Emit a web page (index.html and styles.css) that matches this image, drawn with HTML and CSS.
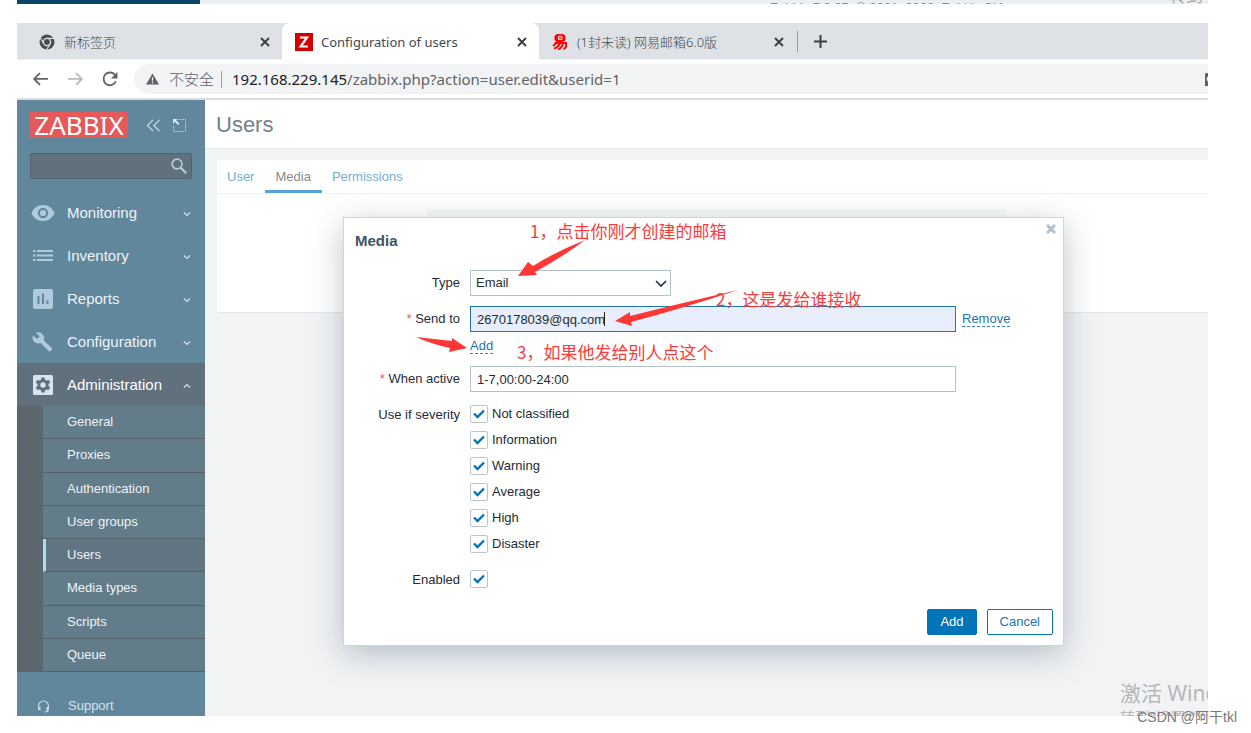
FILE: index.html
```html
<!DOCTYPE html>
<html lang="en">
<head>
<meta charset="utf-8">
<title>Configuration of users</title>
<link rel="stylesheet" href="styles.css">
</head>
<body>
<div class="strip">
  <div class="strip-nav"></div>
  <div class="strip-foot"><span>Zabbix 5.0.25. © 2001–2022, Zabbix SIA</span><span class="strip-mark" lang="zh">转到</span></div>
</div>

<div class="browser">
  <div class="tabbar" lang="zh">
    <div class="tab tab-first">
      <svg class="fav" viewBox="0 0 16 16"><circle cx="8" cy="8" r="7.5" fill="#494c50"/><circle cx="8" cy="8" r="3.6" fill="#494c50" stroke="#dee1e6" stroke-width="1.3"/><path d="M8 4.3h7M4.8 9.8L1.4 4M11.2 9.8L7.8 15.500" stroke="#dee1e6" stroke-width="1.200"/></svg>
      <span class="tab-title">新标签页</span>
      <button class="x" aria-label="Close tab"><svg viewBox="0 0 10 10"><path d="M1 1l8 8M9 1L1 9"/></svg></button>
    </div>
    <div class="tab tab-active">
      <svg class="fav fav-z" viewBox="0 0 18 18"><path fill="#d40000" d="M0 0h18v18H0z"/><path d="M5 4.500h7L5.700 13.500H13" fill="none" stroke="#fff" stroke-width="2.200"/></svg>
      <span class="tab-title">Configuration of users</span>
      <button class="x" aria-label="Close tab"><svg viewBox="0 0 10 10"><path d="M1 1l8 8M9 1L1 9"/></svg></button>
    </div>
    <div class="tab tab-last">
      <svg class="fav" viewBox="0 0 16 16"><path fill="#f00" d="M5 0h6l2.500 2v4L11 8H5L2.500 6V2z"/><path d="M6.500 2h3.500v3.500H6.500zM6.500 3.800h3" stroke="#dee1e6" fill="none" stroke-width=".9"/><path d="M2.500 9h11.500q1 5-2.500 6.200M5.500 8L1 12M8 9.500q-2 4-6 5M11 9.500q-1 4.500-5 6" fill="none" stroke="#f00" stroke-width="1.800"/></svg>
      <span class="tab-title">(1封未读) 网易邮箱6.0版</span>
      <button class="x" aria-label="Close tab"><svg viewBox="0 0 10 10"><path d="M1 1l8 8M9 1L1 9"/></svg></button>
    </div>
    <button class="newtab" aria-label="New tab"><svg viewBox="0 0 13 13"><path d="M6.500 0v13M0 6.500h13"/></svg></button>
  </div>

  <div class="toolbar" lang="zh">
    <button class="nav" aria-label="Back"><svg viewBox="0 0 16 16"><path d="M15 7.500H2M7.500 2L2 7.500 7.500 13"/></svg></button>
    <button class="nav nav-off" aria-label="Forward"><svg viewBox="0 0 16 16"><path d="M1 7.500h13M8.500 2L14 7.500 8.500 13"/></svg></button>
    <button class="nav" aria-label="Reload"><svg viewBox="0 0 16 16"><path d="M13 9.800A6 6 0 1 1 12.300 3.800"/><path d="M14.500 1v6h-6z" fill="#5f6368" stroke="none"/></svg></button>
    <div class="omnibox">
      <svg class="warn" viewBox="0 0 14 12"><path fill="#5f6368" d="M7 0l7 12H0z"/><path d="M7 4v4M7 9v1.500" stroke="#fff" stroke-width="1.300"/></svg>
      <span class="insecure">不安全</span>
      <span class="sep"></span>
      <span class="url"><b>192.168.229.145</b>/zabbix.php?action=user.edit&amp;userid=1</span>
      <svg class="key" viewBox="0 0 3 13"><path fill="#5f6368" d="M1 0h2v3.500a3 3 0 0 0 0 5V13H0V1z"/></svg>
    </div>
  </div>

  <div class="app">
    <aside class="sidebar">
      <div class="brand">
        <a class="logo" href="#">ZABBIX</a>
        <button class="side-btn" aria-label="Collapse sidebar"><svg viewBox="0 0 16 14"><path d="M7.500 1l-6 6 6 6M14.500 1l-6 6 6 6" fill="none" stroke="#c9dbe6" stroke-width="1.300"/></svg></button>
        <button class="side-btn" aria-label="Hide sidebar"><svg viewBox="0 0 14 14"><path d="M6 .5h7.500v13H.5V7" fill="none" stroke="#c9dbe6" stroke-dasharray="1.400 .8"/><path d="M0 0h5L3.500 1.500 7 5 5.500 6.500 2 3 0 5z" fill="#e1ebf1"/></svg></button>
      </div>
      <div class="search">
        <input type="text" aria-label="Search">
        <svg viewBox="0 0 16 16"><circle cx="6" cy="6" r="4.900" fill="none" stroke="#b4ccd9" stroke-width="1.700"/><path d="M9.500 9.500l5.700 5.700" stroke="#b4ccd9" stroke-width="2.200"/></svg>
      </div>
      <nav>
        <a class="item" href="#"><svg class="ico" viewBox="0 0 24 20"><path fill="#afcbdb" fill-rule="evenodd" d="M12 2C6.500 2 2.200 5.300.5 10c1.700 4.700 6 8 11.500 8s9.800-3.300 11.500-8C21.800 5.300 17.500 2 12 2zm0 13.200a5.200 5.200 0 1 1 0-10.400 5.200 5.200 0 0 1 0 10.400z"/><circle cx="12" cy="10" r="3.100" fill="#afcbdb"/></svg><span>Monitoring</span><svg class="chev" viewBox="0 0 8 8"><path d="M1 3.500l3 3 3-3"/></svg></a>
        <a class="item" href="#"><svg class="ico" viewBox="0 0 24 20"><path d="M2 5h2.500M6 5h16M2 9.500h2.500M6 9.500h16M2 14h2.500M6 14h16" stroke="#afcbdb" stroke-width="2.200"/></svg><span>Inventory</span><svg class="chev" viewBox="0 0 8 8"><path d="M1 3.500l3 3 3-3"/></svg></a>
        <a class="item" href="#"><svg class="ico" viewBox="0 0 24 20"><rect x="2" width="20" height="20" rx="2" fill="#afcbdb"/><path d="M7.500 7v8M12 4.500V15M16.500 11.500V15" stroke="#61879d" stroke-width="2"/></svg><span>Reports</span><svg class="chev" viewBox="0 0 8 8"><path d="M1 3.500l3 3 3-3"/></svg></a>
        <a class="item" href="#"><svg class="ico" viewBox="0 0 24 20"><path fill="#afcbdb" d="M21 16.400l-8.300-8.200c.8-2.100.4-4.500-1.400-6.200C9.500.2 6.900-.2 4.800.7l3.800 3.700L6 7.100 2.100 3.400c-1 2.100-.5 4.700 1.300 6.400 1.700 1.700 4.100 2.100 6.200 1.300l8.300 8.200c.4.4.9.4 1.300 0l1.900-1.900c.4-.4.3-.8-.1-1z"/></svg><span>Configuration</span><svg class="chev" viewBox="0 0 8 8"><path d="M1 3.500l3 3 3-3"/></svg></a>
        <a class="item item-open" href="#"><svg class="ico" viewBox="0 0 24 20"><rect x="2" width="20" height="20" rx="1.500" fill="#d3e5f0"/><path fill="#5f707c" d="M10.500 2.500h3l.5 2.200 1.500.9 2.200-.7 1.500 2.600-1.700 1.600v1.800l1.700 1.600-1.500 2.600-2.200-.7-1.500.9-.5 2.200h-3l-.5-2.200-1.500-.9-2.200.7-1.500-2.600 1.700-1.600V9.100L4.800 7.500l1.500-2.600 2.200.7 1.500-.9z"/><circle cx="12" cy="10" r="2.700" fill="#d3e5f0"/></svg><span>Administration</span><svg class="chev" viewBox="0 0 8 8"><path d="M1 6.500l3-3 3 3"/></svg></a>
        <div class="submenu">
          <a href="#">General</a>
          <a href="#">Proxies</a>
          <a href="#">Authentication</a>
          <a href="#">User groups</a>
          <a class="current" href="#">Users</a>
          <a href="#">Media types</a>
          <a href="#">Scripts</a>
          <a href="#">Queue</a>
        </div>
      </nav>
      <a class="support" href="#"><svg viewBox="0 0 13 13"><path d="M1.500 8V6a5 5 0 0 1 10 0v2M11.500 9c0 2-1.500 3-4 3" fill="none" stroke="#c5d8e3" stroke-width="1.200"/><path fill="#c5d8e3" d="M1 7h2.500v4L1 9.500zM12 7H9.500v4L12 9.500z"/></svg><span>Support</span></a>
    </aside>

    <main class="main">
      <header class="page-head"><h1>Users</h1></header>
      <section class="card">
        <div class="subtabs">
          <a href="#">User</a>
          <a class="on" href="#">Media</a>
          <a href="#">Permissions</a>
        </div>
        <div class="card-body"><div class="media-list"></div></div>
      </section>

      <form class="modal">
        <h2>Media</h2>
        <button type="button" class="modal-x" aria-label="Close"><svg viewBox="0 0 10 10"><path d="M1 1l8 8M9 1L1 9"/></svg></button>
        <div class="fields">
          <label for="type">Type</label>
          <div class="row select-box"><select id="type"><option>Email</option></select><svg viewBox="0 0 12 8"><path d="M1 1l5 5 5-5"/></svg></div>
          <label for="sendto" class="req">Send to</label>
          <div class="row sendto"><input id="sendto" class="text focus" type="text" value="2670178039@qq.com"><i class="caret"></i><a class="dashed" href="#">Remove</a></div>
          <span></span>
          <div class="row addrow"><a class="dashed" href="#">Add</a></div>
          <label for="when" class="req">When active</label>
          <div class="row"><input id="when" class="text" type="text" value="1-7,00:00-24:00"></div>
          <span class="label" id="sev">Use if severity</span>
          <div class="checks" role="group" aria-labelledby="sev">
            <label><input type="checkbox" checked>Not classified</label>
            <label><input type="checkbox" checked>Information</label>
            <label><input type="checkbox" checked>Warning</label>
            <label><input type="checkbox" checked>Average</label>
            <label><input type="checkbox" checked>High</label>
            <label><input type="checkbox" checked>Disaster</label>
          </div>
          <label for="enabled" class="label">Enabled</label>
          <div class="checks"><input id="enabled" type="checkbox" checked></div>
        </div>
        <div class="actions"><button type="button" class="btn primary">Add</button><button type="button" class="btn">Cancel</button></div>

        <svg class="arrows"><g transform="translate(-344 -218)" fill="#ff3636"><path d="M518 276l10-14 5 4q22-14 52-26q-24 18-50 32l2 3z"/><path d="M615 321l15-9v4q52-13 108-26q-54 18-107 32l1 4z"/><path d="M467 348l-15-10v3q-18-2-36-4q15 7 34 11l-1 4z"/></g></svg>
        <span class="note note-1" lang="zh">1，点击你刚才创建的邮箱</span>
        <span class="note note-2" lang="zh">2，这是发给谁接收</span>
        <span class="note note-3" lang="zh">3，如果他发给别人点这个</span>
      </form>
      <div class="activate" lang="zh"><p>激活 Windows</p><p class="small">转到“设置”以激活 Windows。</p></div>
    </main>
  </div>
</div>
<div class="credit" lang="zh">CSDN @阿干tkl</div>
</body>
</html>
```

FILE: styles.css
```css
* { box-sizing: border-box; }
body {
  position: relative;
  display: flex;
  flex-direction: column;
  gap: 19px;
  height: 100vh;
  margin: 0;
  padding: 0 43px 17px 17px;
  overflow: hidden;
  background: #fff;
  color: #1f2c33;
  font: 13px/16px "Liberation Sans", "Noto Sans CJK SC", sans-serif;
}
a { text-decoration: none; color: inherit; }
button { padding: 0; border: 0; background: none; font: inherit; }
svg { display: block; }
h1, h2, p { margin: 0; }

.strip { display: flex; flex: none; height: 4px; overflow: hidden; }
.strip-nav { width: 183px; background: #0a466a; }
.strip-foot {
  position: relative;
  flex: 1;
  padding-left: 570px;
  background: #ebeef0;
  color: #768d99;
  white-space: nowrap;
}
.strip-mark { position: absolute; right: 5px; bottom: -1px; color: #aaa; font-size: 17px; }

.browser { display: flex; flex: 1; flex-direction: column; min-height: 0; overflow: hidden; }

.tabbar {
  display: flex;
  flex: none;
  height: 37px;
  border-bottom: 1px solid #f1f2f4;
  background: #dee1e6;
  color: #45494d;
  font: 13px/20px "Noto Sans", "Noto Sans CJK SC", sans-serif;
}
.tab { display: flex; align-items: center; height: 37px; }
.tab-first { width: 265px; padding: 0 11px 0 22px; }
.tab-active { width: 257px; padding: 0 11px 0 13px; border-radius: 8px 8px 0 0; background: #fff; }
.tab-last { width: 258px; padding: 0 12px 0 13px; }
.tab-title { flex: 1; white-space: nowrap; font-weight: 300; }
.tab-active .tab-title { font-weight: 400; }
.fav { flex: none; width: 16px; height: 16px; margin-right: 9px; }
.fav-z { width: 18px; height: 18px; margin-right: 8px; }
.x { display: flex; width: 11px; }
.x svg { width: 10px; height: 10px; stroke: #3c4043; stroke-width: 2; }
.newtab { align-self: center; height: 21px; padding-left: 16px; border-left: 1px solid #96999d; }
.newtab svg { width: 13px; height: 13px; stroke: #3c4043; stroke-width: 2; }

.toolbar {
  display: flex;
  flex: none;
  align-items: center;
  gap: 18px;
  height: 40px;
  padding-left: 15px;
  border-bottom: 2px solid #dadbe2;
}
.nav svg { width: 17px; height: 17px; fill: none; stroke: #5f6368; stroke-width: 1.7; }
.nav-off { opacity: .45; }
.omnibox {
  display: flex;
  flex: 1;
  align-items: center;
  height: 30px;
  margin-left: -3px;
  padding-left: 12px;
  border-radius: 15px 0 0 15px;
  background: #f1f3f4;
  color: #5f6368;
  font: 15px/20px "Noto Sans", "Noto Sans CJK SC", sans-serif;
}
.warn { width: 13px; height: 12px; margin-right: 10px; }
.insecure { font-weight: 300; }
.sep { width: 1px; height: 17px; margin: 0 10px 0 7px; background: #9a9da1; }
.url { flex: 1; white-space: nowrap; }
.url b { font-weight: 400; color: #202124; }
.key { width: 3px; height: 13px; }

.app { display: flex; flex: 1; min-height: 0; }
.sidebar { flex: none; width: 188px; overflow: hidden; background: #61879d; color: #eef3f6; }
.brand { display: flex; align-items: center; padding: 12px 18px 0 13px; }
.logo {
  width: 98px;
  margin-right: 18px;
  background: #e45959;
  color: #fff;
  font: 26px/26px "Noto Sans", sans-serif;
  text-align: center;
}
.side-btn svg { width: 15px; height: 13px; }
.side-btn + .side-btn { margin-left: 12px; }
.side-btn + .side-btn svg { width: 13px; }
.search { position: relative; margin: 15px 13px 12px; }
.search input {
  display: block;
  width: 100%;
  height: 26px;
  border: 1px solid #55636d;
  border-radius: 2px;
  background: #60717d;
}
.search svg { position: absolute; top: 5px; right: 5px; width: 16px; height: 16px; }
.item { display: flex; align-items: center; height: 43px; padding: 0 14px; font-size: 15px; }
.ico { width: 24px; height: 20px; margin-right: 12px; }
.item span { flex: 1; }
.chev { width: 8px; height: 8px; fill: none; stroke: #d5e2ea; stroke-width: 1.2; }
.item-open { background: #60707c; color: #fff; }
.submenu {
  display: grid;
  grid-auto-rows: 1fr;
  height: 266px;
  padding-left: 26px;
  background: #5b666d;
}
.submenu a {
  display: flex;
  align-items: center;
  padding-left: 24px;
  border-bottom: 1px solid #54616a;
  background: #637c8a;
}
.submenu .current { padding-left: 21px; border-left: 3px solid #acd9f5; background: #607481; }
.support { display: flex; align-items: center; padding: 26px 20px 0; color: #d3e1e9; }
.support svg { width: 13px; height: 13px; margin-right: 18px; }

.main { position: relative; flex: 1; min-width: 0; overflow: hidden; background: #f2f3f5; }
.page-head { height: 49px; padding: 13px 11px 0; border-bottom: 1px solid #e5e8ea; background: #fff; }
.page-head h1 { color: #768086; font-size: 22px; line-height: 24px; font-weight: 400; }
.card { margin: 11px 0 0 12px; border-bottom: 1px solid #e3e7ea; background: #fff; }
.subtabs { display: flex; height: 34px; border-bottom: 1px solid #eef0f1; }
.subtabs a { padding: 9px 11px 0 10px; border-bottom: 3px solid transparent; color: #72aed4; }
.subtabs .on { border-color: #57a4d1; color: #858b90; }
.card-body { height: 118px; padding: 16px 202px 0 211px; }
.media-list { height: 60px; border: 1px solid #f1f3f4; background: #fafbfb; }

.modal {
  position: absolute;
  top: 117px;
  left: 138px;
  right: 144px;
  border: 1px solid #ced6db;
  background: #fff;
  box-shadow: 0 8px 30px rgba(105, 128, 141, .45);
}
.modal h2 { padding: 14px 11px 0; color: #40535e; font-size: 15px; line-height: 18px; }
.modal-x { position: absolute; top: 6px; right: 7px; }
.modal-x svg { width: 10px; height: 10px; stroke: #b2c1ca; stroke-width: 3; }
.fields {
  display: grid;
  grid-template-columns: 116px 1fr;
  column-gap: 10px;
  row-gap: 10px;
  padding-top: 20px;
}
.fields > label, .label { line-height: 26px; text-align: right; }
.req::before { content: "* "; color: #e45959; }
.row { display: flex; align-items: center; height: 26px; }
.text, select {
  width: 486px;
  height: 26px;
  padding: 0 6px;
  border: 1px solid #b4c2ca;
  border-radius: 0;
  outline: 0;
  background: #fff;
  color: #1f2c33;
  font: inherit;
}
.focus { border-color: #1f72aa; background: #e8eefc; }
.sendto, .select-box { position: relative; }
.caret { position: absolute; top: 6px; left: 134px; width: 1px; height: 14px; background: #222; }
select { width: 201px; padding: 0 5px; appearance: none; }
.select-box svg { position: absolute; top: 10px; left: 185px; width: 12px; height: 8px; fill: none; stroke: #26343c; stroke-width: 1.7; }
.dashed { border-bottom: 1px dashed #3c86b8; color: #1f72aa; line-height: 15px; }
.sendto .dashed { margin-left: 6px; }
.addrow { align-items: flex-end; height: 14px; padding-bottom: 2px; }
.checks { display: flex; flex-direction: column; gap: 8px; padding: 3px 0 4px; }
.checks label { display: flex; align-items: center; gap: 4px; height: 18px; }
.checks input {
  width: 18px;
  height: 18px;
  margin: 0;
  border: 1px solid #b9c6cd;
  border-radius: 2px;
  appearance: none;
  background: url("data:image/svg+xml,%3Csvg xmlns='http://www.w3.org/2000/svg' viewBox='0 0 12 12'%3E%3Cpath d='M1 5.500l3.500 3.500L11 2.500' fill='none' stroke='%230275b8' stroke-width='2.400'/%3E%3C/svg%3E") center / 12px 12px no-repeat #fff;
}
.actions { display: flex; justify-content: flex-end; gap: 10px; padding: 16px 10px 10px; }
.btn { height: 26px; padding: 0 12px; border: 1px solid #0275b8; border-radius: 2px; color: #1f72aa; background: #fff; }
.primary { background: #0275b8; color: #fff; }

.arrows { position: absolute; inset: 0; width: 100%; height: 100%; pointer-events: none; }
.note {
  position: absolute;
  color: #fb3b3b;
  font: 17px/24px "Noto Sans CJK SC", sans-serif;
  white-space: nowrap;
  pointer-events: none;
}
.note-1 { top: 1px; left: 186px; }
.note-2 { top: 69px; left: 372px; }
.note-3 { top: 122px; left: 173px; }

.activate {
  position: absolute;
  left: calc(100% - 88px);
  bottom: -11px;
  color: #b5b7b9;
  font: 21px/28px "Noto Sans", "Noto Sans CJK SC", sans-serif;
  white-space: nowrap;
}
.activate .small { font-size: 15px; line-height: 20px; }
.credit {
  position: absolute;
  right: 14px;
  bottom: 6px;
  color: #77797b;
  font: 14px/20px "Liberation Sans", "Noto Sans CJK SC", sans-serif;
}
```
